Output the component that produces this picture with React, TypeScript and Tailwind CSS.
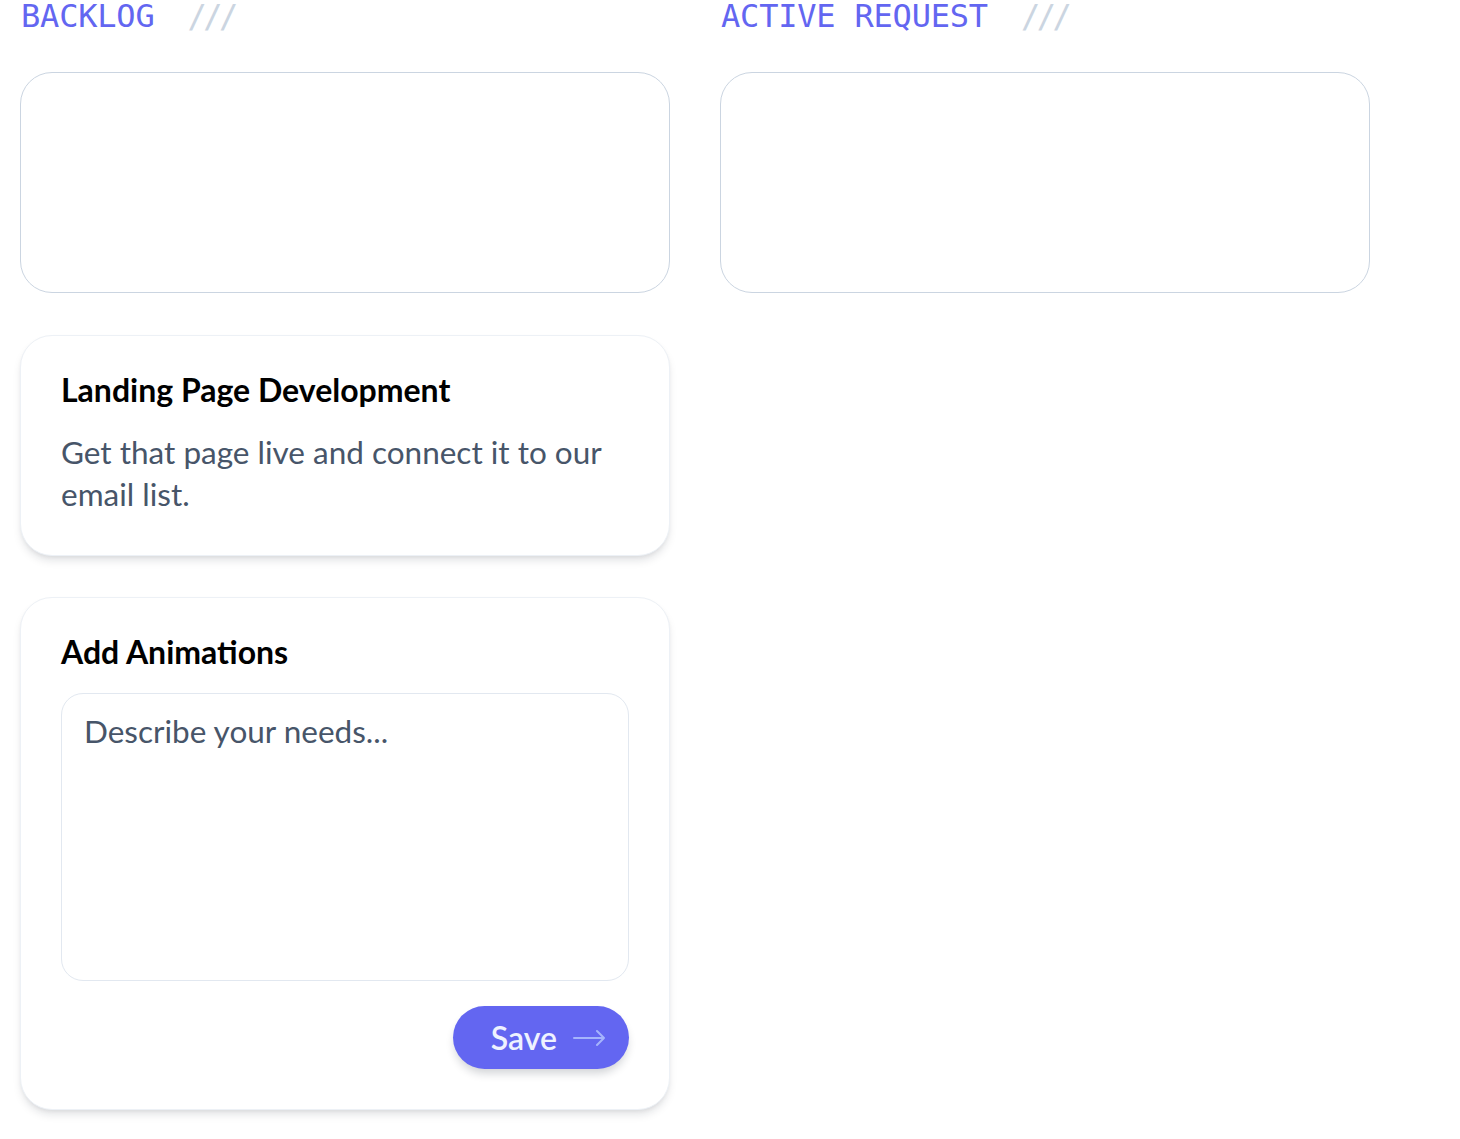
import React from 'react';

const Column: React.FC<{ title: string; children?: React.ReactNode }> = ({ title, children }) => {
  return (
    <section className="w-[650px] flex flex-col">
      <div className="flex items-center gap-[33px] h-8 pl-[1px] leading-none text-[32px] font-['DejaVu_Sans_Mono',monospace]">
        <span className="text-[#6366f1] tracking-[-0.2px]">{title}</span>
        <span className="text-[#cbd5e1] tracking-[-3.5px]">///</span>
      </div>
      <div className="mt-10 h-[221px] rounded-[32px] border border-[#cbd5e1]" />
      {children}
    </section>
  );
};

const ArrowLong = () => (
  <svg width="32" height="18" viewBox="0 0 32 18" fill="none" className="text-[#a5b4fc]">
    <path d="M1 9H31M24 2L31 9L24 16" stroke="currentColor" strokeWidth="2" strokeLinecap="round" strokeLinejoin="round" />
  </svg>
);

export default function App() {
  return (
    <div className="min-h-screen bg-white px-5 font-['Lato',sans-serif]">
      <div className="flex gap-[50px]">
        <Column title="BACKLOG">
          <div className="mt-[42px] rounded-[32px] border border-[#edf1f6] bg-white px-10 pt-[42px] pb-10 shadow-[0_6px_10px_-2px_rgba(15,23,42,0.13),0_2px_4px_-1px_rgba(15,23,42,0.06)]">
            <h3 className="text-[32px] leading-[24px] font-bold text-black">Landing Page Development</h3>
            <p className="mt-[29px] text-[31.5px] leading-[42px] text-[#475569]">
              Get that page live and connect it to our email list.
            </p>
          </div>

          <div className="mt-[41px] mb-8 rounded-[32px] border border-[#edf1f6] bg-white px-10 pt-[42px] pb-10 shadow-[0_6px_10px_-2px_rgba(15,23,42,0.13),0_2px_4px_-1px_rgba(15,23,42,0.06)]">
            <h3 className="text-[32px] leading-[24px] font-bold text-black">Add Animations</h3>
            <textarea
              placeholder="Describe your needs..."
              className="mt-[29px] block w-full h-[288px] resize-none rounded-[22px] border border-[#e2e8f0] pl-[22px] pr-6 py-4 text-[31.5px] leading-[42px] text-[#475569] placeholder:text-[#475569] outline-none font-['Lato',sans-serif]"
            />
            <div className="mt-[25px] flex justify-end">
              <button className="flex h-[63px] items-center gap-4 rounded-full bg-[#6366f1] pl-[38px] pr-[24px] text-[32px] font-semibold text-[#eef2ff] shadow-[0_6px_10px_-2px_rgba(15,23,42,0.2)]">
                Save
                <ArrowLong />
              </button>
            </div>
          </div>
        </Column>
        <Column title="ACTIVE REQUEST" />
      </div>
    </div>
  );
}
